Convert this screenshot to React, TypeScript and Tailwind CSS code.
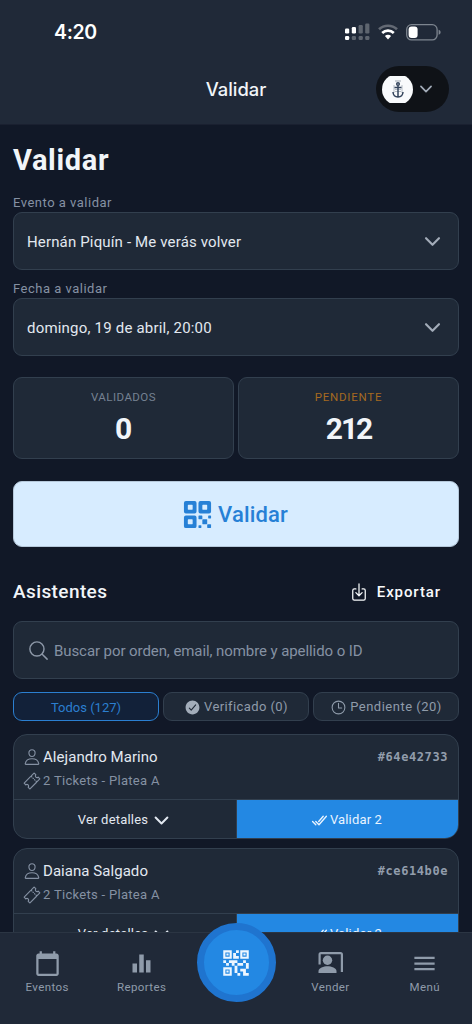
import React from 'react';
import {
  IoCheckmarkCircle,
  IoCheckmarkDoneOutline,
  IoChevronDown,
  IoDownloadOutline,
  IoPersonOutline,
  IoQrCode,
  IoSearchOutline,
  IoTicketOutline,
  IoTimeOutline,
} from 'react-icons/io5';
import { MdCalendarToday, MdEqualizer, MdMenu, MdQrCode2 } from 'react-icons/md';

const attendees = [
  { id: '64e42733', name: 'Alejandro Marino', tickets: '2 Tickets - Platea A', pending: 2 },
  { id: 'ce614b0e', name: 'Daiana Salgado', tickets: '2 Tickets - Platea A', pending: 2 },
];

const StatusBar: React.FC = () => (
  <div className="flex h-[64px] items-center justify-between pr-[31px] pl-[54px]">
    <span className="pt-[2px] font-[Inter] text-[19.5px] font-semibold tracking-[-0.35px] text-white">4:20</span>
    <div className="flex items-center gap-[8px]">
      {/* Dual SIM signal */}
      <svg width="25" height="18" viewBox="0 0 25 18" fill="#fff">
        <rect x="0" y="5.5" width="4.2" height="5" rx="1.2" />
        <rect x="6.8" y="4" width="4.2" height="6.5" rx="1.2" />
        <g opacity=".28">
          <rect x="13.6" y="2" width="4.2" height="8.5" rx="1.2" />
          <rect x="20.2" y="0.5" width="4.2" height="10" rx="1.2" />
          <rect x="6.8" y="13" width="4.2" height="4" rx="1.2" />
          <rect x="13.6" y="13" width="4.2" height="4" rx="1.2" />
          <rect x="20.2" y="13" width="4.2" height="4" rx="1.2" />
        </g>
        <rect x="0" y="13" width="4.2" height="4" rx="1.2" />
      </svg>
      <svg width="20" height="16" viewBox="0 0 20 16" fill="none">
        <path d="M1 5.3a13 13 0 0 1 18 0" stroke="#fff" strokeOpacity=".3" strokeWidth="2.6" />
        <path d="M4.2 9a8.3 8.3 0 0 1 11.6 0" stroke="#fff" strokeWidth="2.6" />
        <path d="M6.9 12.1a4.4 4.4 0 0 1 6.2 0L10 15.4z" fill="#fff" />
      </svg>
      <svg width="35" height="17" viewBox="0 0 35 17" fill="none">
        <rect x=".7" y=".7" width="30.4" height="15.2" rx="4.8" stroke="#7d858f" strokeWidth="1.3" />
        <rect x="2.6" y="2.6" width="9" height="11.4" rx="3" fill="#fff" />
        <path d="M32.6 5.8c1.5.5 2 1.3 2 2.5s-.5 2-2 2.5z" fill="#7d858f" />
      </svg>
    </div>
  </div>
);

const Header: React.FC = () => (
  <header className="h-[125px] shrink-0 border-b border-[#1a2030] bg-[#202938]">
    <StatusBar />
    <div className="grid h-[50px] grid-cols-[1fr_auto_1fr] items-center pr-[23px] pl-[23px]">
      <span />
      <h2 className="font-[Inter] text-[18.4px] leading-6 font-medium text-[#f1f5f9]">Validar</h2>
      <button className="flex h-[46px] w-[73px] items-center gap-[4px] justify-self-end rounded-full bg-[#0f1217] pl-[6px]">
        <span className="flex size-[31px] items-center justify-center overflow-hidden rounded-full">
          <span className="flex h-[27px] w-[31px] items-center justify-center bg-[#f8fafc]">
            <svg width="12" height="19" viewBox="0 0 12 19" fill="none" stroke="#33445c" strokeWidth="1.5">
              <path d="M3.5 1h5" strokeDasharray="1 1" opacity=".6" />
              <circle cx="6" cy="4" r="1.3" />
              <path d="M6 5.5V17M2.5 7.5h7M1 12c.2 3.3 2 5 5 5s4.8-1.7 5-5" />
              <path d="M2 5v8M10 5v8M3 9.5h6M3 11.5h6" strokeWidth="1" opacity=".35" />
            </svg>
          </span>
        </span>
        <IoChevronDown className="size-[18px] text-[#a3acb9] [&_path]:stroke-[48px]" />
      </button>
    </div>
  </header>
);

const SelectField: React.FC<{ label: string; value: string; spacing: string }> = ({ label, value, spacing }) => (
  <div>
    <label className="block h-[19px] text-[13px] leading-[19px] tracking-[0.5px] text-[#8591a3]">{label}</label>
    <button className="flex h-[58px] w-full items-center justify-between rounded-[9px] border border-[#323f4e] bg-[#1f2937] pr-[14px] pl-[13px]">
      <span className={`pt-[2px] text-[15px] text-[#e2e8f0] ${spacing}`}>{value}</span>
      <IoChevronDown className="size-[23px] text-[#a3acb9]" />
    </button>
  </div>
);

const AttendeeCard: React.FC<{ attendee: (typeof attendees)[number] }> = ({ attendee }) => (
  <article className="h-[105px] shrink-0 overflow-hidden rounded-[14px] border border-[#323f4e] bg-[#1f2937]">
    <div className="flex h-[65px] justify-between border-b border-[#323f4e] pt-[10px] pr-[10px] pl-[9px]">
      <div>
        <div className="flex h-6 items-center gap-[2px]">
          <IoPersonOutline className="size-[18px] text-[#8591a3]" />
          <span className="text-[15px] tracking-[0.05px] text-[#e2e8f0]">{attendee.name}</span>
        </div>
        <div className="flex h-6 items-center gap-[2px]">
          <IoTicketOutline className="size-[18px] text-[#8591a3]" />
          <span className="text-[13px] tracking-[0.3px] text-[#8591a3]">{attendee.tickets}</span>
        </div>
      </div>
      <span className="mt-[3px] font-['DejaVu_Sans_Mono'] text-[12px] leading-[18px] font-bold tracking-[0.58px] text-[#929dac]">
        #{attendee.id}
      </span>
    </div>
    <div className="grid h-[38px] grid-cols-2 text-[13px]">
      <button className="flex items-center justify-center gap-[3px] pt-[2px] tracking-[0.2px] text-[#e2e8f0]">
        Ver detalles
        <IoChevronDown className="size-[21px]" />
      </button>
      <button className="flex items-center justify-center gap-[2px] border-l border-[#323f4e] bg-[#2388e3] pt-[2px] pr-[2px] tracking-[0.15px] text-[#e8f3ff]">
        <IoCheckmarkDoneOutline className="size-[17px] [&_path]:stroke-[42px]" />
        Validar {attendee.pending}
      </button>
    </div>
  </article>
);

const SellIcon: React.FC = () => (
  <svg className="size-[27px]" viewBox="0 0 27 27" fill="currentColor">
    <path d="M1.500 14.500V4.500Q1.500 2 4 2h19.500Q26 2 26 4.500V22h-2.200V4.200H3.700v10.300z" />
    <circle cx="10.500" cy="10.200" r="4.700" />
    <path d="M1.500 23v-2c0-3 5.200-4.800 9-4.800s9 1.800 9 4.800v2z" />
  </svg>
);

const TabBar: React.FC = () => (
  <nav className="absolute inset-x-0 bottom-0 grid h-[92px] grid-cols-5 border-t border-[#2b3543] bg-[#202938] text-[11.5px] tracking-[0.4px] text-[#8f9baa]">
    <a className="flex flex-col items-center pt-[17px]">
      <MdCalendarToday className="size-[27px]" />
      <span className="leading-[20px]">Eventos</span>
    </a>
    <a className="flex flex-col items-center pt-[17px]">
      <MdEqualizer className="size-[27px]" />
      <span className="leading-[20px]">Reportes</span>
    </a>
    <a className="relative flex justify-center">
      <span className="absolute -top-[10px] left-[8px] flex size-[79px] items-center justify-center rounded-full border-[7px] border-[#1f74cf] bg-[#2388e3]">
        <MdQrCode2 className="size-[34px] text-[#edf6ff]" />
      </span>
    </a>
    <a className="flex flex-col items-center pt-[17px]">
      <SellIcon />
      <span className="leading-[20px]">Vender</span>
    </a>
    <a className="flex flex-col items-center pt-[17px]">
      <MdMenu className="size-[27px]" />
      <span className="leading-[20px]">Menú</span>
    </a>
  </nav>
);

const App: React.FC = () => {
  return (
    <div className="relative flex h-[1024px] w-[472px] flex-col overflow-hidden bg-[#111827] font-[Roboto,sans-serif]">
      <Header />

      <main className="flex flex-col px-[13px] pt-[17px]">
        <h1 className="h-[36px] text-[29px] leading-[36px] font-bold tracking-[0.65px] text-[#f1f5f9]">Validar</h1>

        <div className="mt-[15px] flex flex-col gap-[9px]">
          <SelectField label="Evento a validar" value="Hernán Piquín - Me verás volver" spacing="tracking-[0.15px]" />
          <SelectField label="Fecha a validar" value="domingo, 19 de abril, 20:00" spacing="tracking-[0.2px]" />
        </div>

        {/* Counters */}
        <div className="mt-[21px] grid grid-cols-2 gap-[4px] text-center">
          <div className="h-[82px] rounded-[9px] border border-[#323f4e] bg-[#1f2937] pt-[10px]">
            <p className="text-[11.5px] leading-[18px] tracking-[0.45px] text-[#758192]">VALIDADOS</p>
            <p className="mt-[5px] text-[30px] leading-[36px] font-bold text-[#f1f5f9]">0</p>
          </div>
          <div className="h-[82px] rounded-[9px] border border-[#323f4e] bg-[#1f2937] pt-[10px]">
            <p className="text-[11.5px] leading-[18px] tracking-[0.75px] text-[#a56a20]">PENDIENTE</p>
            <p className="mt-[5px] text-[30px] leading-[36px] font-bold tracking-[-2px] text-[#f1f5f9]">212</p>
          </div>
        </div>

        <button className="mt-[22px] flex h-[66px] items-center justify-center gap-[5px] rounded-[9px] border border-[#b5c8da] bg-[#d7ecff] pr-[2px] text-[22px] font-medium tracking-[0.15px] text-[#2680d6]">
          <IoQrCode className="size-[31px]" />
          Validar
        </button>

        <div className="mt-[25px] flex h-[40px] items-center justify-between pr-[18px]">
          <h3 className="text-[19px] font-medium tracking-[0.4px] text-[#f1f5f9]">Asistentes</h3>
          <button className="flex items-center gap-[8px] text-[15px] font-medium tracking-[0.9px] text-[#f8fafc]">
            <IoDownloadOutline className="size-[20px]" />
            Exportar
          </button>
        </div>

        <div className="mt-[9px] flex h-[58px] items-center gap-[4px] rounded-[9px] border border-[#323f4e] bg-[#1f2937] pl-[13px]">
          <IoSearchOutline className="size-[23px] text-[#8d98a8]" />
          <span className="pt-[3px] text-[15px] tracking-[-0.08px] text-[#8591a3]">
            Buscar por orden, email, nombre y apellido o ID
          </span>
        </div>

        {/* Status filters */}
        <div className="mt-[13px] grid grid-cols-3 gap-[4px] text-[13px] text-[#8f9baa]">
          <button className="flex h-[29px] items-center justify-center rounded-[9px] border border-[#2b7fd0] bg-[#122139] pt-[2px] tracking-[0px] text-[#2b7fd0]">
            Todos (127)
          </button>
          <button className="flex h-[29px] items-center justify-center gap-[3px] rounded-[9px] border border-[#323f4e] bg-[#1f2937] pt-px tracking-[0.4px]">
            <IoCheckmarkCircle className="size-[17px] text-[#a3adba]" />
            Verificado (0)
          </button>
          <button className="flex h-[29px] items-center justify-center gap-[3px] rounded-[9px] border border-[#323f4e] bg-[#1f2937] pt-px tracking-[0.5px]">
            <IoTimeOutline className="size-[17px]" />
            Pendiente (20)
          </button>
        </div>

        <div className="mt-[13px] flex flex-col gap-[9px]">
          {attendees.map((attendee) => (
            <AttendeeCard key={attendee.id} attendee={attendee} />
          ))}
        </div>
      </main>

      <TabBar />
    </div>
  );
};

export default App;
